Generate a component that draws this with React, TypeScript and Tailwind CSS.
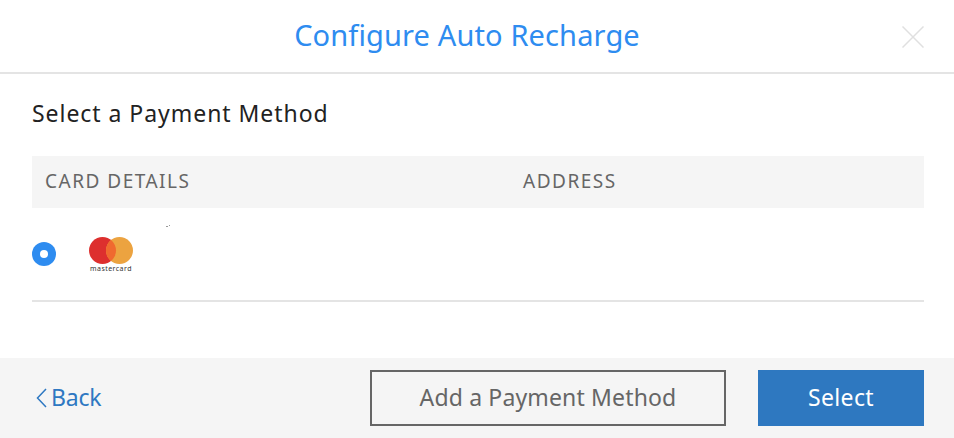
const font = "font-['Noto_Sans','Open_Sans',sans-serif]";

export default function App() {
  return (
    <div className={`w-[954px] h-[438px] bg-white flex flex-col overflow-hidden ${font}`}>
      <header className="relative h-[74px] shrink-0 flex items-center justify-center border-b-2 border-[#e4e4e4] pr-[20px]">
        <h1 className="text-[29px] leading-none text-[#2e8cf0] tracking-[0.13px] pb-[3px]">Configure Auto Recharge</h1>
        <button className="absolute right-[30px] top-[26px] text-[#e0e0e0]">
          <svg width="22" height="22" viewBox="0 0 22 22" fill="none" stroke="currentColor" strokeWidth="1.5">
            <path d="M0.5 0.5 L21.5 21.5 M21.5 0.5 L0.5 21.5" />
          </svg>
        </button>
      </header>

      <main className="flex-1 pl-8 pr-[30px]">
        <h2 className="mt-[25px] text-[23px] leading-[28px] text-[#222] tracking-[0.96px]">Select a Payment Method</h2>
        <div className="mt-[29px] h-[52px] bg-[#f5f5f5] grid grid-cols-[478px_1fr] items-center pl-[13px] pb-[2px] text-[19px] text-[#666] tracking-[1.5px]">
          <span>CARD DETAILS</span>
          <span>ADDRESS</span>
        </div>
        <div className="relative h-[94px] border-b-2 border-[#e4e4e4] flex items-center">
          <span className="w-6 h-6 rounded-full bg-[#2e8cf0] flex items-center justify-center">
            <span className="w-2 h-2 rounded-full bg-white" />
          </span>
          <div className="ml-[33px] mt-[1px] w-[44px] flex flex-col items-center">
            <svg width="44" height="27" viewBox="0 0 44 27">
              <circle cx="13.5" cy="13.5" r="13.5" fill="#dd2f2e" />
              <circle cx="30.5" cy="13.5" r="13.5" fill="#eca340" />
              <path d="M22 3 A13.5 13.5 0 0 1 22 24 A13.5 13.5 0 0 1 22 3 Z" fill="#f0692f" />
            </svg>
            <span className="text-[7px] leading-[9px] text-[#333] tracking-[0.45px]">mastercard</span>
          </div>
          <span className="absolute left-[134px] top-[18px] w-[2px] h-[1px] bg-[#999]" />
          <span className="absolute left-[137px] top-[17px] w-[1px] h-[1px] bg-[#999]" />
        </div>
      </main>

      <footer className="h-[80px] shrink-0 bg-[#f5f5f5] flex items-center justify-between pl-[36px] pr-[30px]">
        <a className="flex items-center gap-[4px] text-[23px] leading-[30px] text-[#2e78c2] tracking-[-0.2px] pb-[2px]">
          <svg width="11" height="20" viewBox="0 0 11 20" fill="none" stroke="currentColor" strokeWidth="1.5" className="mt-[2px]">
            <path d="M10 1 L1.5 10 L10 19" />
          </svg>
          Back
        </a>
        <div className="flex gap-8">
          <button className="w-[356px] h-[56px] border-2 border-[#666] text-[23px] text-[#666] tracking-[0.15px] pb-[2px]">Add a Payment Method</button>
          <button className="w-[166px] h-[56px] bg-[#2e78c0] text-[23px] text-white tracking-[0.37px] pb-[2px]">Select</button>
        </div>
      </footer>
    </div>
  );
}
